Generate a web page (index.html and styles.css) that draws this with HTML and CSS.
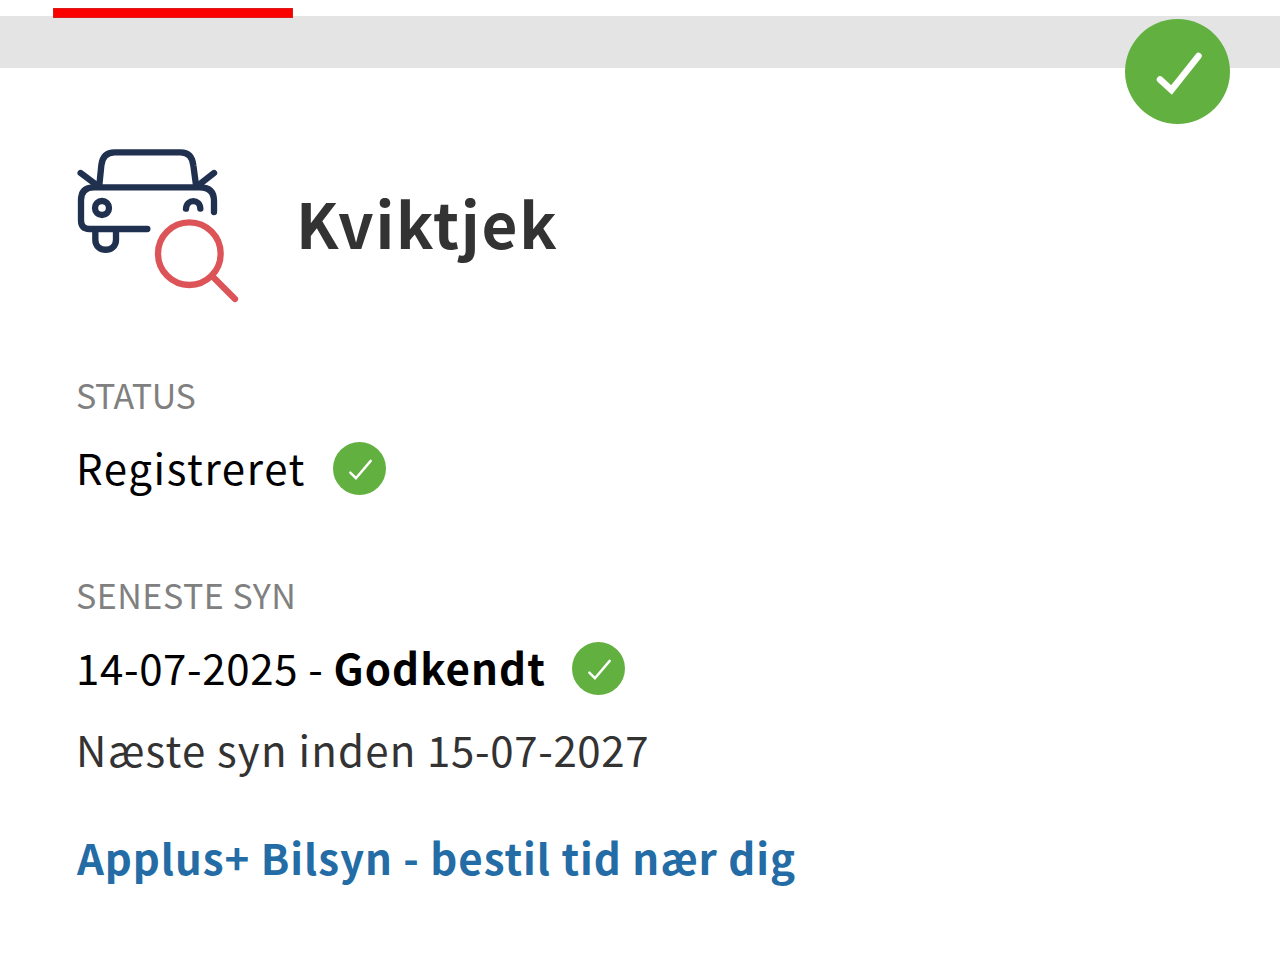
FILE: index.html
```
<!DOCTYPE html>
<html lang="da">
<head>
    <meta charset="UTF-8">
    <meta name="viewport" content="width=device-width, initial-scale=1.0">
    <title>Kviktjek</title>
    <link rel="stylesheet" href="styles.css">
</head>
<body>

<nav class="tabs">
    <div class="tab-active"></div>
</nav>
<div class="divider"></div>

<main class="card">
    <svg class="card-badge" viewBox="0 0 105 105">
        <circle cx="52.5" cy="52.5" r="52.5"/>
        <path d="M35 60.500L46.500 71L73.500 37" stroke-width="6.500"/>
    </svg>

    <header class="card-header">
        <svg class="car-icon" viewBox="51 39 489 468">
            <g class="car">
                <path d="M118 150L124 91Q128 52 164 52H362Q396 52 400 91L408 150"/>
                <path d="M62 114L110 150M462 114L416 150"/>
                <path d="M262 282H88Q63 282 63 256V196Q63 157 102 157H420Q462 157 462 198V231"/>
                <circle cx="126" cy="219" r="21"/>
                <path d="M378 221C380 191 420 191 421 221"/>
                <path d="M106 286V315C106 354 168 354 168 315V286"/>
            </g>
            <g class="lens">
                <circle cx="388" cy="356" r="94"/>
                <path d="M460 427L525 492"/>
            </g>
        </svg>
        <h1>Kviktjek</h1>
    </header>

    <section class="field">
        <h2 class="status-label">STATUS</h2>
        <div class="value">
            <span class="registered">Registreret</span>
            <svg class="check" viewBox="0 0 52 52">
                <circle cx="26" cy="26" r="26"/>
                <path d="M17 30L22.500 35.500L37 18.500" stroke-width="2.400"/>
            </svg>
        </div>
    </section>

    <section class="field">
        <h2 class="inspection-label">SENESTE SYN</h2>
        <div class="value inspection">
            <span><span class="date">14-07-2025 - </span><strong>Godkendt</strong></span>
            <svg class="check" viewBox="0 0 52 52">
                <circle cx="26" cy="26" r="26"/>
                <path d="M17 30L22.500 35.500L37 18.500" stroke-width="2.400"/>
            </svg>
        </div>
        <p class="next">Næste syn inden <span class="date">15-07-2027</span></p>
    </section>

    <a class="booking" href="#">Applus+ Bilsyn - bestil tid nær dig</a>
</main>

</body>
</html>
```
FILE: styles.css
```
* {
    margin: 0;
    padding: 0;
    box-sizing: border-box;
}

body {
    font-family: "Noto Sans CJK SC", "Open Sans", sans-serif;
    font-size: 42px;
    line-height: 60px;
    color: #000;
    background: #fff;
}

.tabs {
    display: flex;
    height: 16px;
    padding: 8px 0 0 53px;
}

.tab-active {
    width: 240px;
    height: 10px;
    background: #fa0000;
    border: 1px solid #dc1c1c;
    z-index: 1;
}

.divider {
    height: 52px;
    background: #e4e4e4;
}

.card {
    position: relative;
    padding: 80px 76px 0;
}

/* Sits across the divider and the card */
.card-badge {
    position: absolute;
    top: -49px;
    right: 50px;
    width: 105px;
    height: 105px;
}

.card-badge circle,
.check circle {
    fill: #62b140;
}

.card-badge path,
.check path {
    fill: none;
    stroke: #fff;
    stroke-linecap: round;
}

.card-header {
    display: flex;
    gap: 56px;
    height: 223px;
    padding-left: 1px;
}

.car-icon {
    width: 163px;
    height: 156px;
}

.car-icon path,
.car-icon circle {
    fill: none;
    stroke-width: 19;
    stroke-linecap: round;
    stroke-linejoin: round;
}

.car {
    stroke: #20304f;
}

.lens {
    stroke: #dc5458;
}

h1 {
    padding-top: 29px;
    font-size: 62px;
    line-height: 90px;
    letter-spacing: 1.7px;
    color: #333;
}

.field {
    margin-bottom: 74px;
}

h2 {
    margin-bottom: 18px;
    font-size: 34px;
    font-weight: 400;
    line-height: 48px;
    color: #808080;
}

.status-label {
    letter-spacing: -0.4px;
}

.inspection-label {
    letter-spacing: 0.5px;
}

.value {
    display: flex;
    align-items: center;
    gap: 27px;
    height: 60px;
    white-space: pre;
}

.inspection {
    gap: 26px;
}

.registered {
    letter-spacing: 1.6px;
}

.date {
    letter-spacing: 0.65px;
}

strong {
    letter-spacing: 1.1px;
}

.check {
    width: 53px;
    height: 53px;
    margin-top: 3px;
}

.next {
    margin-top: 22px;
    letter-spacing: 1.2px;
    color: #333;
}

.booking {
    display: block;
    margin-top: -26px;
    padding-left: 1px;
    font-weight: 700;
    letter-spacing: 0.95px;
    color: #236ca5;
    text-decoration: none;
}
```
